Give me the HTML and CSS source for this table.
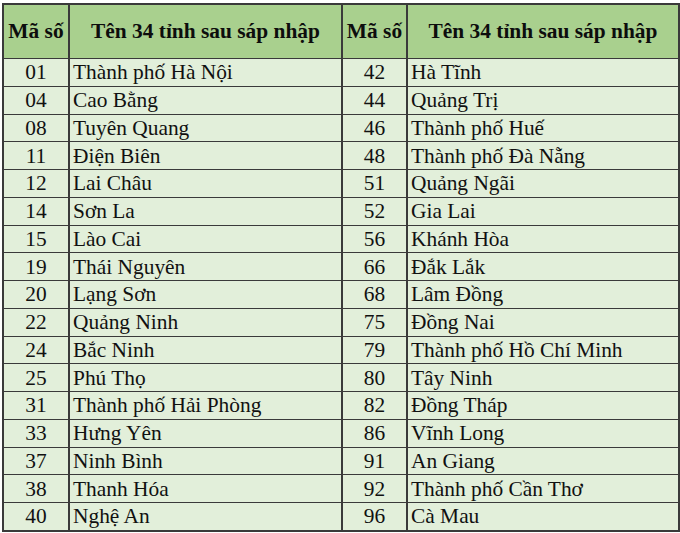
FILE: index.html
```html
<!DOCTYPE html>
<html lang="vi">
<head>
<meta charset="utf-8">
<link rel="stylesheet" href="styles.css">
</head>
<body>
<table class="tbl">
<colgroup><col class="c-code"><col class="c-name"><col class="c-code2"><col class="c-name2"></colgroup>
<thead>
<tr><th>Mã số</th><th>Tên 34 tỉnh sau sáp nhập</th><th>Mã số</th><th>Tên 34 tỉnh sau sáp nhập</th></tr>
</thead>
<tbody>
<tr><td class="code">01</td><td>Thành phố Hà Nội</td><td class="code">42</td><td>Hà Tĩnh</td></tr>
<tr><td class="code">04</td><td>Cao Bằng</td><td class="code">44</td><td>Quảng Trị</td></tr>
<tr><td class="code">08</td><td>Tuyên Quang</td><td class="code">46</td><td>Thành phố Huế</td></tr>
<tr><td class="code">11</td><td>Điện Biên</td><td class="code">48</td><td>Thành phố Đà Nẵng</td></tr>
<tr><td class="code">12</td><td>Lai Châu</td><td class="code">51</td><td>Quảng Ngãi</td></tr>
<tr><td class="code">14</td><td>Sơn La</td><td class="code">52</td><td>Gia Lai</td></tr>
<tr><td class="code">15</td><td>Lào Cai</td><td class="code">56</td><td>Khánh Hòa</td></tr>
<tr><td class="code">19</td><td>Thái Nguyên</td><td class="code">66</td><td>Đắk Lắk</td></tr>
<tr><td class="code">20</td><td>Lạng Sơn</td><td class="code">68</td><td>Lâm Đồng</td></tr>
<tr><td class="code">22</td><td>Quảng Ninh</td><td class="code">75</td><td>Đồng Nai</td></tr>
<tr><td class="code">24</td><td>Bắc Ninh</td><td class="code">79</td><td>Thành phố Hồ Chí Minh</td></tr>
<tr><td class="code">25</td><td>Phú Thọ</td><td class="code">80</td><td>Tây Ninh</td></tr>
<tr><td class="code">31</td><td>Thành phố Hải Phòng</td><td class="code">82</td><td>Đồng Tháp</td></tr>
<tr><td class="code">33</td><td>Hưng Yên</td><td class="code">86</td><td>Vĩnh Long</td></tr>
<tr><td class="code">37</td><td>Ninh Bình</td><td class="code">91</td><td>An Giang</td></tr>
<tr><td class="code">38</td><td>Thanh Hóa</td><td class="code">92</td><td>Thành phố Cần Thơ</td></tr>
<tr><td class="code">40</td><td>Nghệ An</td><td class="code">96</td><td>Cà Mau</td></tr>
</tbody>
</table>
</body>
</html>
```

FILE: styles.css
```css
html, body {
  margin: 0;
  padding: 0;
  background: #ffffff;
}
body {
  padding: 3px 0 0 2px;
  font-family: "Liberation Serif", "DejaVu Serif", serif;
  color: #111;
}
.tbl {
  border-collapse: collapse;
  width: 676px;
  table-layout: fixed;
  border: 2px solid #3a3a3a;
  font-family: "Liberation Serif", "DejaVu Serif", serif;
}
.c-code { width: 66px; }
.c-name { width: 273px; }
.c-code2 { width: 65px; }
.c-name2 { width: 272px; }
.tbl th {
  background: #a9d08e;
  height: 53px;
  padding: 0;
  font-family: "Liberation Serif", serif;
  font-size: 21.4px;
  font-weight: bold;
  text-align: center;
  vertical-align: middle;
  border: 1px solid #3a3a3a;
  border-right-width: 2px;
  white-space: nowrap;
  color: #0d0d0d;
}
.tbl td {
  background: #e2efda;
  height: 26.76px;
  padding: 0 0 0 3px;
  font-family: "Liberation Serif", serif;
  font-size: 21.4px;
  line-height: 24px;
  vertical-align: middle;
  border: 1px solid #3a3a3a;
  border-right-width: 2px;
  white-space: nowrap;
}
.tbl td.code {
  text-align: center;
  padding: 0;
}
```
